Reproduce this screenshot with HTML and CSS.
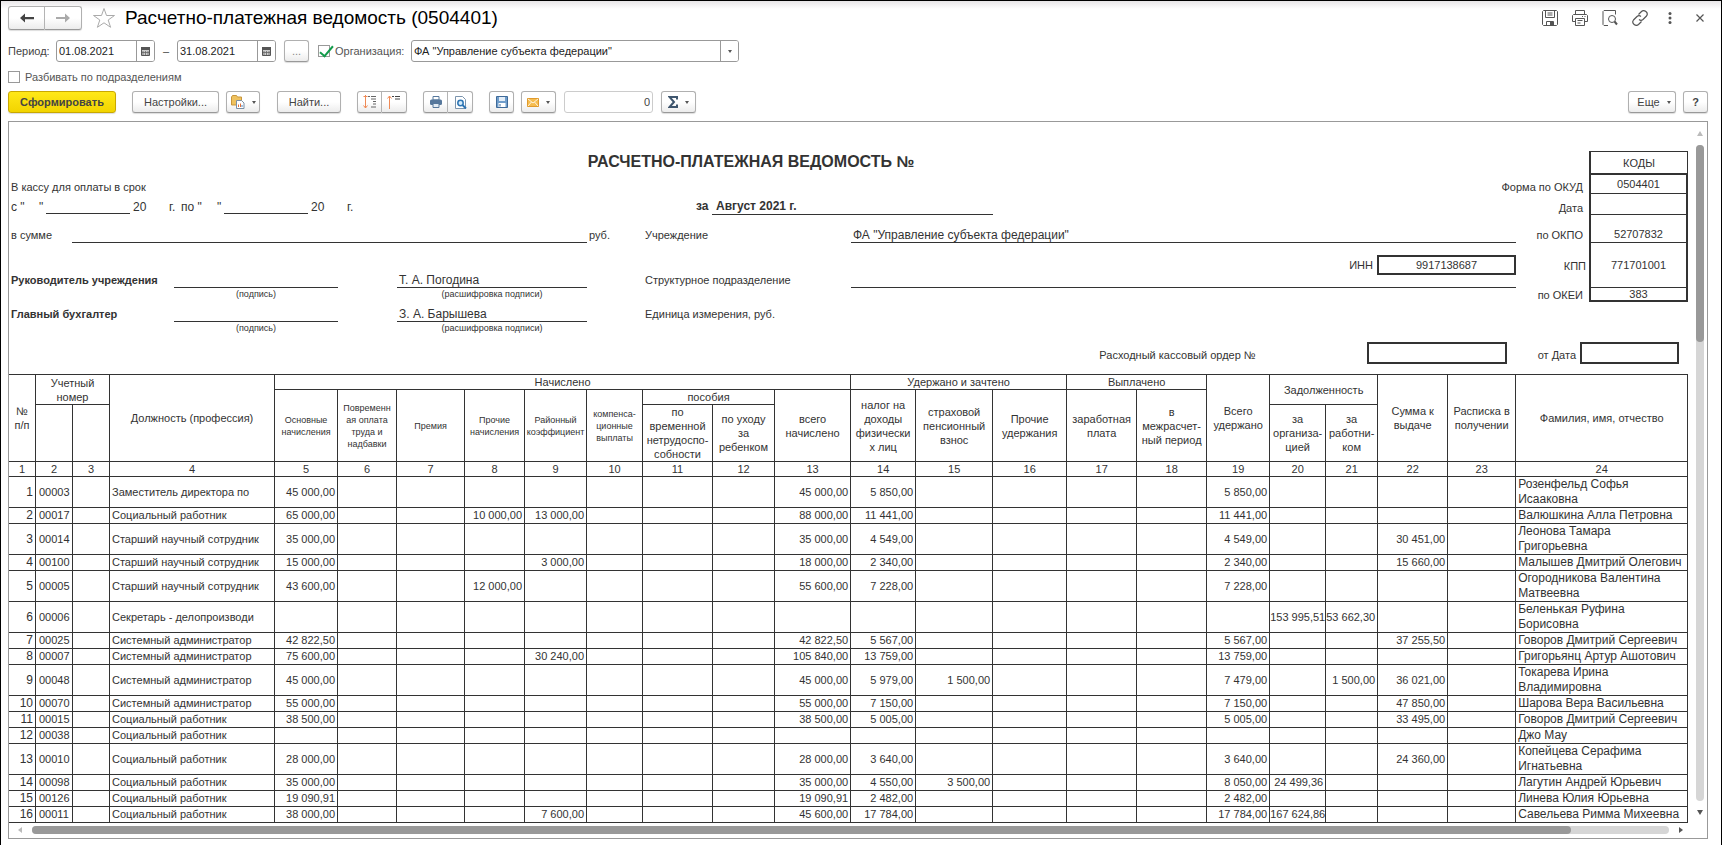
FILE: index.html
```html
<!DOCTYPE html>
<html lang="ru">
<head>
<meta charset="utf-8">
<title>Расчетно-платежная ведомость (0504401)</title>
<link rel="stylesheet" href="styles.css">
</head>
<body>
<div class="window">
<header class="titlebar">
  <div class="group nav">
    <button class="btn" type="button" aria-label="Назад"><svg width="14" height="10" viewBox="0 0 14 10"><path d="M0 5 5 .5V4h9v2.200H5v3.300z" fill="#444"/></svg></button>
    <button class="btn" type="button" aria-label="Вперед"><svg width="14" height="10" viewBox="0 0 14 10"><path d="M14 5 9 .5V4H0v2h9v3.500z" fill="#aaa"/></svg></button>
  </div>
  <button class="plain star" type="button" aria-label="В избранное"><svg width="24" height="22" viewBox="0 0 24 22"><path d="M12 1.500 14.500 8.500H22.500L16.200 13 18.600 20.300 12 15.800 5.400 20.300 7.800 13 1.500 8.500H9.500z" fill="none" stroke="#aaa"/></svg></button>
  <h1>Расчетно-платежная ведомость (0504401)</h1>
  <div class="tools">
    <button class="plain" type="button" aria-label="Сохранить"><svg viewBox="0 0 16 16"><path d="M1.500.5h13l1 1v13l-1 1h-13l-1-1v-13zM3.500.5v7h9v-7M5.500 3h5M5.500 5h5M4.500 15.500v-4h7v4" /><path d="M8 12h3v3H8z" fill="#555" stroke="none"/></svg></button>
    <button class="plain" type="button" aria-label="Печать"><svg viewBox="0 0 16 16"><path d="M3.500 4.500v-4h9v4M3.500 11.500h-3v-6l1-1h13l1 1v6h-3M3.500 8.500h9v7h-9zM5.500 10.500h5M5.500 13h3M10 6.500h1M12.500 6.500h1"/></svg></button>
    <button class="plain" type="button" aria-label="Просмотр"><svg viewBox="0 0 16 16"><path d="M6 15.500H2l-1-1v-13l1-1h11.500v4"/><circle cx="10" cy="9" r="3.500"/><path d="m12.500 11.500 2.500 3" stroke-width="2"/></svg></button>
    <button class="plain" type="button" aria-label="Ссылка"><svg viewBox="0 0 16 16"><path d="M6.500 4.500 9.500 1.500C12-.8 17 2.500 14.500 6L11 9.500C9.500 10.700 8 10.300 7 9.500M9.500 11.500l-3 3C4 16.800-1 13.500 1.500 10L5 6.500C6.500 5.300 8 5.700 9 6.500" stroke-width="1.200"/></svg></button>
    <button class="plain" type="button" aria-label="Меню"><svg viewBox="0 0 16 16"><g fill="#555" stroke="none"><circle cx="8" cy="3.500" r="1.500"/><circle cx="8" cy="8" r="1.500"/><circle cx="8" cy="12.500" r="1.500"/></g></svg></button>
    <button class="plain" type="button" aria-label="Закрыть"><svg viewBox="0 0 16 16"><path d="m4.500 4.500 7 7M11.500 4.500l-7 7" stroke-width="1.200"/></svg></button>
  </div>
</header>

<div class="filters">
  <label for="from">Период:</label>
  <div class="field date"><input id="from" type="text" value="01.08.2021"><button class="pick" type="button" aria-label="Календарь"><svg width="9" height="10" viewBox="0 0 9 10"><path d="M.5 1.500h8v8h-8z" fill="#ccc" stroke="#555"/><path d="M0 1h9v3H0z" fill="#555"/><path d="M2 5v4M4.500 5v4M7 5v4M1 6.500h7" stroke="#666" stroke-width=".8"/></svg></button></div>
  <span class="dash">–</span>
  <div class="field date"><input type="text" aria-label="Конец периода" value="31.08.2021"><button class="pick" type="button" aria-label="Календарь"><svg width="9" height="10" viewBox="0 0 9 10"><path d="M.5 1.500h8v8h-8z" fill="#ccc" stroke="#555"/><path d="M0 1h9v3H0z" fill="#555"/><path d="M2 5v4M4.500 5v4M7 5v4M1 6.500h7" stroke="#666" stroke-width=".8"/></svg></button></div>
  <button class="btn dots" type="button">...</button>
  <label class="check org"><input type="checkbox" checked>Организация:</label>
  <div class="field select"><select aria-label="Организация"><option>ФА "Управление субъекта федерации"</option></select><span class="pick"><i class="caret"></i></span></div>
</div>
<div class="split"><label class="check"><input type="checkbox">Разбивать по подразделениям</label></div>

<div class="toolbar">
  <button class="btn primary" type="button">Сформировать</button>
  <button class="btn settings" type="button">Настройки...</button>
  <button class="btn menu variants" type="button" aria-label="Варианты"><svg width="14" height="14" viewBox="0 0 14 14"><path d="M.5 2 1.500.5h4l1 1.500h4v8H.5z" fill="#efc25e" stroke="#c8963c"/><path d="M5.500 5.500h5l2.500 2.500v5.500H5.500z" fill="#fff" stroke="#7b8fa5"/><path d="M7.500 12V9.500M9.500 12V8.500" stroke="#e0703a"/><path d="M11 12v-2" stroke="#4a86c5"/></svg><i class="caret"></i></button>
  <button class="btn find" type="button">Найти...</button>
  <div class="group pair">
    <button class="btn" type="button" aria-label="Развернуть"><svg width="14" height="14" viewBox="0 0 14 14"><path d="M2.500 0v13M.5 10.500l2 2.500 2-2.500M.5 1.500h4" fill="none" stroke="#ef8a56"/><path d="M5 1.500h2M8 1.500h5M8 4h5M10 6.500h3M10 9h3M8 12h5" stroke="#666"/></svg></button>
    <button class="btn" type="button" aria-label="Свернуть"><svg width="14" height="14" viewBox="0 0 14 14"><path d="M2.500 14V1M.5 3.500l2-2.500 2 2.500" fill="none" stroke="#ef8a56"/><path d="M5 1.500h2M8 1.500h5M8 4h5" stroke="#444"/></svg></button>
  </div>
  <div class="group pair">
    <button class="btn" type="button" aria-label="Печать"><svg width="12" height="12" viewBox="0 0 12 12"><path d="M3 .5h6V4H3z" fill="#fff" stroke="#57789c"/><rect y="3.500" width="12" height="5.500" rx="1.500" fill="#57789c"/><path d="M3 7.500h6v4H3z" fill="#e3ecf4" stroke="#57789c"/></svg></button>
    <button class="btn" type="button" aria-label="Предпросмотр"><svg width="13" height="13" viewBox="0 0 13 13"><path d="M1.500.5h7l3 3v9h-10z" fill="#fff" stroke="#7b94ad"/><circle cx="6.500" cy="7" r="2.700" fill="#d5ebfa" stroke="#2d75b4" stroke-width="1.500"/><path d="m8.500 9 3.500 3.500" stroke="#2d75b4" stroke-width="2"/></svg></button>
  </div>
  <button class="btn save" type="button" aria-label="Сохранить"><svg width="12" height="12" viewBox="0 0 12 12"><path d="M.5.5h11v11H.5z" fill="#6f9dcb" stroke="#3f6a99"/><path d="M3 1h6v4H3z" fill="#e4eef8"/><path d="M2.500 7h7v4h-7z" fill="#fff"/><path d="M4 8v2.500" stroke="#3f6a99"/></svg></button>
  <button class="btn menu mail" type="button" aria-label="Отправить"><svg width="12" height="9" viewBox="0 0 12 9"><path d="M.5.5h11v8H.5z" fill="#f6bd50" stroke="#e09a2c"/><path d="m1 1 5 4 5-4M1 8l3.500-4M11 8 7.500 4" fill="none" stroke="#fff" stroke-width=".8"/></svg><i class="caret"></i></button>
  <input class="sum" type="text" value="0" aria-label="Сумма">
  <button class="btn menu sigma" type="button" aria-label="Сумма выделенных"><svg width="10" height="12" viewBox="0 0 10 12"><path d="M9 3.500V1H1.500L6 6l-4.500 5H9V8.500" fill="none" stroke="#3f566e" stroke-width="2"/></svg><i class="caret"></i></button>
  <button class="btn menu more" type="button">Еще <i class="caret"></i></button>
  <button class="btn help" type="button">?</button>
</div>

<main class="report">
  <div class="sheet">
    <section class="form">
      <h2>РАСЧЕТНО-ПЛАТЕЖНАЯ ВЕДОМОСТЬ №</h2>
      <div class="code code-head">КОДЫ</div>
      <div class="r2 base from1">В кассу для оплаты в срок</div>
      <div class="r2 base lbl">Форма по ОКУД</div><div class="r2 code first">0504401</div>
      <div class="r3 term"><span>с "</span><span>"</span><i></i><span>20</span><span>г.</span><span>по "</span><span>"</span><i></i><span>20</span><span>г.</span></div>
      <div class="r3 month"><b>за</b><b class="line">Август 2021 г.</b></div>
      <div class="r3 base lbl">Дата</div><div class="r3 code"></div>
      <div class="r4 low from1">в сумме</div><div class="r4 line sumline"></div><div class="r4 low rub">руб.</div>
      <div class="r4 low mid">Учреждение</div><div class="r4 line long big">ФА "Управление субъекта федерации"</div>
      <div class="r4 low lbl">по ОКПО</div><div class="r4 low code">52707832</div>
      <div class="r5 low from1"><b>Руководитель учреждения</b></div><div class="r5 line sign"></div><div class="r5 line name big">Т. А. Погодина</div>
      <div class="r5 low mid">Структурное подразделение</div><div class="r5 line long"></div>
      <div class="r5 inn"><span>ИНН</span><output>9917138687</output></div>
      <div class="r5 lbl kpp">КПП</div><div class="r5 code">771701001</div>
      <small class="r6 sign">(подпись)</small><small class="r6 name">(расшифровка подписи)</small>
      <div class="r6 lbl">по ОКЕИ</div><div class="r6 code last">383</div>
      <div class="r7 low from1"><b>Главный бухгалтер</b></div><div class="r7 line sign"></div><div class="r7 line name big">З. А. Барышева</div>
      <div class="r7 low mid">Единица измерения, руб.</div>
      <small class="r8 sign">(подпись)</small><small class="r8 name">(расшифровка подписи)</small>
    </section>
    <div class="order"><span>Расходный кассовый ордер №</span><output class="number"></output><span>от Дата</span><output class="day"></output></div>

    <table>
      <colgroup><col class="w27"><col class="w37"><col class="w37"><col class="w165"><col class="w63"><col class="w59"><col class="w68"><col class="w60"><col class="w62"><col class="w56"><col class="w70"><col class="w62"><col class="w76"><col class="w65"><col class="w77"><col class="w74"><col class="w70"><col class="w70"><col class="w63"><col class="w56"><col class="w52"><col class="w70"><col class="w68"><col class="w172"></colgroup>
      <thead>
        <tr class="h15"><th rowspan="3">№<br>п/п</th><th rowspan="2" colspan="2">Учетный<br>номер</th><th rowspan="3">Должность (профессия)</th><th colspan="9">Начислено</th><th colspan="3">Удержано и зачтено</th><th colspan="2">Выплачено</th><th rowspan="3">Всего<br>удержано</th><th rowspan="2" colspan="2">Задолженность</th><th rowspan="3">Сумма к<br>выдаче</th><th rowspan="3">Расписка в<br>получении</th><th rowspan="3">Фамилия, имя, отчество</th></tr>
        <tr class="h15"><th rowspan="2" class="s">Основные<br>начисления</th><th rowspan="2" class="s">Повременн<br>ая оплата<br>труда и<br>надбавки</th><th rowspan="2" class="s">Премия</th><th rowspan="2" class="s">Прочие<br>начисления</th><th rowspan="2" class="s">Районный<br>коэффициент</th><th rowspan="2" class="s">компенса-<br>ционные<br>выплаты</th><th colspan="2">пособия</th><th rowspan="2">всего<br>начислено</th><th rowspan="2">налог на<br>доходы<br>физически<br>х лиц</th><th rowspan="2">страховой<br>пенсионный<br>взнос</th><th rowspan="2">Прочие<br>удержания</th><th rowspan="2">заработная<br>плата</th><th rowspan="2">в<br>межрасчет-<br>ный период</th></tr>
        <tr class="h57"><th></th><th></th><th>по<br>временной<br>нетрудоспо-<br>собности</th><th>по уходу<br>за<br>ребенком</th><th>за<br>организа-<br>цией</th><th>за<br>работни-<br>ком</th></tr>
        <tr class="h15"><th>1</th><th>2</th><th>3</th><th>4</th><th>5</th><th>6</th><th>7</th><th>8</th><th>9</th><th>10</th><th>11</th><th>12</th><th>13</th><th>14</th><th>15</th><th>16</th><th>17</th><th>18</th><th>19</th><th>20</th><th>21</th><th>22</th><th>23</th><th>24</th></tr>
      </thead>
      <tbody>
        <tr><td>1</td><td>00003</td><td></td><td>Заместитель директора по</td><td>45 000,00</td><td></td><td></td><td></td><td></td><td></td><td></td><td></td><td>45 000,00</td><td>5 850,00</td><td></td><td></td><td></td><td></td><td>5 850,00</td><td></td><td></td><td></td><td></td><td>Розенфельд Софья<br>Исааковна</td></tr>
        <tr><td>2</td><td>00017</td><td></td><td>Социальный работник</td><td>65 000,00</td><td></td><td></td><td>10 000,00</td><td>13 000,00</td><td></td><td></td><td></td><td>88 000,00</td><td>11 441,00</td><td></td><td></td><td></td><td></td><td>11 441,00</td><td></td><td></td><td></td><td></td><td>Валюшкина Алла Петровна</td></tr>
        <tr><td>3</td><td>00014</td><td></td><td>Старший научный сотрудник</td><td>35 000,00</td><td></td><td></td><td></td><td></td><td></td><td></td><td></td><td>35 000,00</td><td>4 549,00</td><td></td><td></td><td></td><td></td><td>4 549,00</td><td></td><td></td><td>30 451,00</td><td></td><td>Леонова Тамара<br>Григорьевна</td></tr>
        <tr><td>4</td><td>00100</td><td></td><td>Старший научный сотрудник</td><td>15 000,00</td><td></td><td></td><td></td><td>3 000,00</td><td></td><td></td><td></td><td>18 000,00</td><td>2 340,00</td><td></td><td></td><td></td><td></td><td>2 340,00</td><td></td><td></td><td>15 660,00</td><td></td><td>Малышев Дмитрий Олегович</td></tr>
        <tr><td>5</td><td>00005</td><td></td><td>Старший научный сотрудник</td><td>43 600,00</td><td></td><td></td><td>12 000,00</td><td></td><td></td><td></td><td></td><td>55 600,00</td><td>7 228,00</td><td></td><td></td><td></td><td></td><td>7 228,00</td><td></td><td></td><td></td><td></td><td>Огородникова Валентина<br>Матвеевна</td></tr>
        <tr><td>6</td><td>00006</td><td></td><td>Секретарь - делопроизводи</td><td></td><td></td><td></td><td></td><td></td><td></td><td></td><td></td><td></td><td></td><td></td><td></td><td></td><td></td><td></td><td>153 995,51</td><td>53 662,30</td><td></td><td></td><td>Беленькая Руфина<br>Борисовна</td></tr>
        <tr><td>7</td><td>00025</td><td></td><td>Системный администратор</td><td>42 822,50</td><td></td><td></td><td></td><td></td><td></td><td></td><td></td><td>42 822,50</td><td>5 567,00</td><td></td><td></td><td></td><td></td><td>5 567,00</td><td></td><td></td><td>37 255,50</td><td></td><td>Говоров Дмитрий Сергеевич</td></tr>
        <tr><td>8</td><td>00007</td><td></td><td>Системный администратор</td><td>75 600,00</td><td></td><td></td><td></td><td>30 240,00</td><td></td><td></td><td></td><td>105 840,00</td><td>13 759,00</td><td></td><td></td><td></td><td></td><td>13 759,00</td><td></td><td></td><td></td><td></td><td>Григорьянц Артур Ашотович</td></tr>
        <tr><td>9</td><td>00048</td><td></td><td>Системный администратор</td><td>45 000,00</td><td></td><td></td><td></td><td></td><td></td><td></td><td></td><td>45 000,00</td><td>5 979,00</td><td>1 500,00</td><td></td><td></td><td></td><td>7 479,00</td><td></td><td>1 500,00</td><td>36 021,00</td><td></td><td>Токарева Ирина<br>Владимировна</td></tr>
        <tr><td>10</td><td>00070</td><td></td><td>Системный администратор</td><td>55 000,00</td><td></td><td></td><td></td><td></td><td></td><td></td><td></td><td>55 000,00</td><td>7 150,00</td><td></td><td></td><td></td><td></td><td>7 150,00</td><td></td><td></td><td>47 850,00</td><td></td><td>Шарова Вера Васильевна</td></tr>
        <tr><td>11</td><td>00015</td><td></td><td>Социальный работник</td><td>38 500,00</td><td></td><td></td><td></td><td></td><td></td><td></td><td></td><td>38 500,00</td><td>5 005,00</td><td></td><td></td><td></td><td></td><td>5 005,00</td><td></td><td></td><td>33 495,00</td><td></td><td>Говоров Дмитрий Сергеевич</td></tr>
        <tr><td>12</td><td>00038</td><td></td><td>Социальный работник</td><td></td><td></td><td></td><td></td><td></td><td></td><td></td><td></td><td></td><td></td><td></td><td></td><td></td><td></td><td></td><td></td><td></td><td></td><td></td><td>Джо Мау</td></tr>
        <tr><td>13</td><td>00010</td><td></td><td>Социальный работник</td><td>28 000,00</td><td></td><td></td><td></td><td></td><td></td><td></td><td></td><td>28 000,00</td><td>3 640,00</td><td></td><td></td><td></td><td></td><td>3 640,00</td><td></td><td></td><td>24 360,00</td><td></td><td>Копейцева Серафима<br>Игнатьевна</td></tr>
        <tr><td>14</td><td>00098</td><td></td><td>Социальный работник</td><td>35 000,00</td><td></td><td></td><td></td><td></td><td></td><td></td><td></td><td>35 000,00</td><td>4 550,00</td><td>3 500,00</td><td></td><td></td><td></td><td>8 050,00</td><td>24 499,36</td><td></td><td></td><td></td><td>Лагутин Андрей Юрьевич</td></tr>
        <tr><td>15</td><td>00126</td><td></td><td>Социальный работник</td><td>19 090,91</td><td></td><td></td><td></td><td></td><td></td><td></td><td></td><td>19 090,91</td><td>2 482,00</td><td></td><td></td><td></td><td></td><td>2 482,00</td><td></td><td></td><td></td><td></td><td>Линева Юлия Юрьевна</td></tr>
        <tr><td>16</td><td>00011</td><td></td><td>Социальный работник</td><td>38 000,00</td><td></td><td></td><td></td><td>7 600,00</td><td></td><td></td><td></td><td>45 600,00</td><td>17 784,00</td><td></td><td></td><td></td><td></td><td>17 784,00</td><td>167 624,86</td><td></td><td></td><td></td><td>Савельева Римма Михеевна</td></tr>
      </tbody>
    </table>
  </div>
  <div class="vscroll"><i class="tri up"></i><div class="track"><div class="thumb"></div></div><i class="tri down"></i></div>
  <div class="hscroll"><i class="tri left"></i><div class="track"><div class="thumb"></div></div><i class="tri right"></i></div>
</main>
</div>
</body>
</html>
```
FILE: styles.css
```css
* { box-sizing: border-box; }
body {
  margin: 0;
  font: 11px/14px "Liberation Sans", Arial, sans-serif;
  color: #444;
  background: #fff;
}
button, input, select { font: inherit; color: inherit; margin: 0; }
.window {
  min-height: 100vh;
  min-width: 1700px;
  display: flex;
  flex-direction: column;
  border: 1px solid #000;
  padding: 5px 13px 6px 7px;
  background: linear-gradient(#e8e6e8, #fff 8px);
}

/* Buttons */
.btn {
  height: 22px;
  padding: 0;
  display: flex;
  align-items: center;
  justify-content: center;
  border: 1px solid #b0b0b0;
  border-bottom-color: #999;
  border-radius: 3px;
  background: linear-gradient(#fff 50%, #ececec);
  box-shadow: 0 1px 1px #ddd;
}
.group { display: flex; }
.group .btn:first-child { border-radius: 3px 0 0 3px; }
.group .btn:last-child { border-radius: 0 3px 3px 0; border-left: 0; }
.plain { border: 0; padding: 0; background: none; display: flex; }
.menu { gap: 7px; }
.caret {
  border: 2px solid transparent;
  border-top: 3px solid #555;
  border-bottom: 0;
}

/* Title bar */
.titlebar { display: flex; align-items: center; height: 24px; }
.nav .btn { height: 24px; width: 37px; }
.star { margin: 0 9px 0 10px; }
h1 { margin: 0; font-size: 19px; line-height: 24px; font-weight: 400; color: #000; }
.tools { margin-left: auto; display: flex; gap: 14px; }
.tools svg { width: 16px; height: 16px; fill: none; stroke: #555; }

/* Filters */
.filters { display: flex; align-items: center; margin-top: 10px; height: 22px; }
.field {
  display: flex;
  height: 22px;
  border: 1px solid #999;
  border-radius: 3px;
  overflow: hidden;
  background: #fff;
  color: #222;
}
.field input, .field select {
  flex: 1;
  min-width: 0;
  border: 0;
  padding: 0 2px;
  background: none;
  appearance: none;
  outline: 0;
}
.pick {
  width: 18px;
  padding: 0;
  border: 0;
  border-left: 1px solid #999;
  background: #fff;
  display: flex;
  align-items: center;
  justify-content: center;
}
.date { width: 99px; }
.filters > label:first-child { width: 48px; }
.dash { width: 22px; text-align: center; }
.dots { width: 25px; margin: 0 9px 0 8px; color: #888; }
.select { width: 328px; }
.check { display: flex; align-items: center; gap: 5px; color: #555; }
.org { width: 93px; }
.check input {
  appearance: none;
  width: 12px;
  height: 12px;
  border: 1px solid #999;
  background: #fff;
  display: grid;
}
.check input:checked::before {
  content: "";
  width: 5px;
  height: 12px;
  margin: -3px 0 0 4px;
  border: solid #139a4b;
  border-width: 0 2px 2px 0;
  transform: rotate(40deg);
}
.split { margin-top: 8px; height: 14px; }

/* Toolbar */
.toolbar { display: flex; margin: 7px 0 8px; }
.primary {
  width: 108px;
  font-weight: 700;
  border-color: #c9a800;
  background: linear-gradient(#ffe818, #f2d400);
}
.settings { width: 87px; margin-left: 16px; }
.variants { width: 34px; margin-left: 7px; }
.find { width: 64px; margin: 0 16px 0 17px; }
.pair { margin-right: 16px; }
.pair .btn { width: 25px; }
.save { width: 25px; }
.mail { width: 35px; margin: 0 8px 0 7px; }
.sum {
  width: 89px;
  height: 22px;
  border: 1px solid #ccc;
  border-radius: 3px;
  padding: 0 2px;
  text-align: right;
}
.sigma { width: 35px; margin-left: 8px; }
.more { width: 48px; margin-left: auto; padding-left: 4px; }
.help { width: 25px; margin-left: 7px; font-weight: 700; }

/* Report area */
.report {
  flex: 1;
  display: grid;
  grid-template: 1fr 15px / 1fr 12px;
  border: 1px solid #999;
  color: #333;
  background: #fff;
}
.sheet { padding: 29px 7px 0 0; overflow: hidden; }
.form {
  display: grid;
  grid-template-columns: 63px 102px 164px 59px 190px 57px 207px 1fr 139px 73px 99px;
  grid-template-rows: 22px 21px 21px 28px 45px 14px 20px 14px;
  align-items: stretch;
  white-space: nowrap;
}
.form > * { display: flex; align-items: center; }
.form > .low { align-items: flex-end; padding-bottom: 1px; }
.form > .base { align-items: flex-end; }
h2 { grid-area: 1 / 1 / 2 / 10; justify-content: center; margin: 0; padding-right: 23px; font-size: 16px; line-height: 20px; }
.from1 { grid-column: 1 / 3; padding-left: 2px; }
.r2 { grid-row: 2; } .r3 { grid-row: 3; } .r4 { grid-row: 4; } .r5 { grid-row: 5; }
.r6 { grid-row: 6; } .r7 { grid-row: 7; } .r8 { grid-row: 8; }
.form > .line { border-bottom: 1px solid #333; align-items: flex-end; padding-left: 2px; }
.big { font-size: 12px; }
.sumline { grid-column: 2 / 6; }
.rub { grid-column: 6; padding-left: 2px; }
.mid { grid-column: 7; padding-left: 1px; }
.long { grid-column: 8 / 10; }
.sign { grid-column: 3; }
.name { grid-column: 5; }
small { font-size: 9px; line-height: 12px; justify-content: center; }
.form > small { align-items: flex-start; }
.form > .lbl { grid-column: 10; justify-content: flex-end; padding-right: 6px; }
.form > .kpp { padding-right: 3px; }
.code {
  grid-column: 11;
  justify-content: center;
  border: solid #333;
  border-width: 0 2px 1px 2px;
}
.code-head { grid-row: 1; border-width: 1px 1px 0 2px; }
.first { border-top-width: 2px; }
.last { border-bottom-width: 2px; }
.form > .term { grid-column: 1 / 6; align-items: flex-end; padding: 0 0 1px 2px; font-size: 12px; }
.term span:nth-child(1) { width: 28px; }
.term span:nth-child(6) { width: 36px; }
.term span:nth-child(2), .term span:nth-child(7) { width: 7px; }
.term span:nth-child(4), .term span:nth-child(9) { width: 39px; padding-left: 3px; }
.term span:nth-child(5) { width: 12px; }
.term i { width: 84px; height: 12px; border-bottom: 1px solid #333; }
.month { grid-column: 7 / 9; padding-left: 52px; font-size: 12px; }
.month b { height: 21px; padding-top: 5px; }
.month b:first-child { width: 16px; }
.month .line { width: 281px; padding-left: 4px; border-bottom: 1px solid #333; }
.inn { grid-column: 8 / 10; justify-content: flex-end; gap: 4px; padding-bottom: 1px; }
output {
  display: flex;
  align-items: center;
  justify-content: center;
  border: 2px solid #333;
}
.inn output { width: 139px; height: 20px; }
.order { display: flex; align-items: center; justify-content: flex-end; margin: 6px 9px 10px 0; }
.order span { padding-top: 3px; }
.order output { height: 22px; }
.number { width: 140px; margin: 0 31px 0 111px; }
.day { width: 99px; margin-left: 4px; }

/* Payroll table */
table {
  width: 100%;
  table-layout: fixed;
  border-collapse: separate;
  border-spacing: 0;
  border-top: 1px solid #333;
}
th, td {
  border: solid #333;
  border-width: 0 1px 1px 0;
  padding: 0;
  white-space: nowrap;
}
th { font-weight: 400; line-height: 14px; }
th.s { font-size: 9px; line-height: 12px; }
td { height: 16px; line-height: 15px; text-align: right; padding-right: 2px; }
td:nth-child(2) { text-align: left; padding-left: 3px; }
td:nth-child(4), td:nth-child(24) { text-align: left; padding-left: 2px; }
td:nth-child(1), td:nth-child(24) { font-size: 12px; }
.h15 { height: 15px; }
.h57 { height: 57px; }
.w27 { width: 27px; } .w37 { width: 37px; } .w52 { width: 52px; } .w56 { width: 56px; }
.w59 { width: 59px; } .w60 { width: 60px; } .w62 { width: 62px; } .w63 { width: 63px; }
.w65 { width: 65px; } .w68 { width: 68px; } .w70 { width: 70px; } .w74 { width: 74px; }
.w76 { width: 76px; } .w77 { width: 77px; } .w165 { width: 165px; } .w172 { width: 172px; }

/* Scroll bars */
.vscroll { display: flex; flex-direction: column; align-items: center; padding: 9px 3px 8px 0; gap: 9px; }
.vscroll .track { flex: 1; width: 8px; }
.vscroll .thumb { height: 30%; }
.track { background: #d6d6d6; border-radius: 4px; }
.thumb { background: #999; border-radius: 4px; }
.hscroll { grid-column: 1 / 3; display: flex; align-items: center; gap: 10px; padding: 0 24px 1px 9px; }
.hscroll .track { flex: 1; height: 8px; }
.hscroll .thumb { width: 94%; height: 8px; }
.tri { border: 3px solid transparent; }
.up { border-top: 0; border-bottom: 5px solid #bbb; }
.down { border-bottom: 0; border-top: 5px solid #555; }
.left { border-left: 0; border-right: 4px solid #bbb; }
.right { border-right: 0; border-left: 4px solid #555; }
```
